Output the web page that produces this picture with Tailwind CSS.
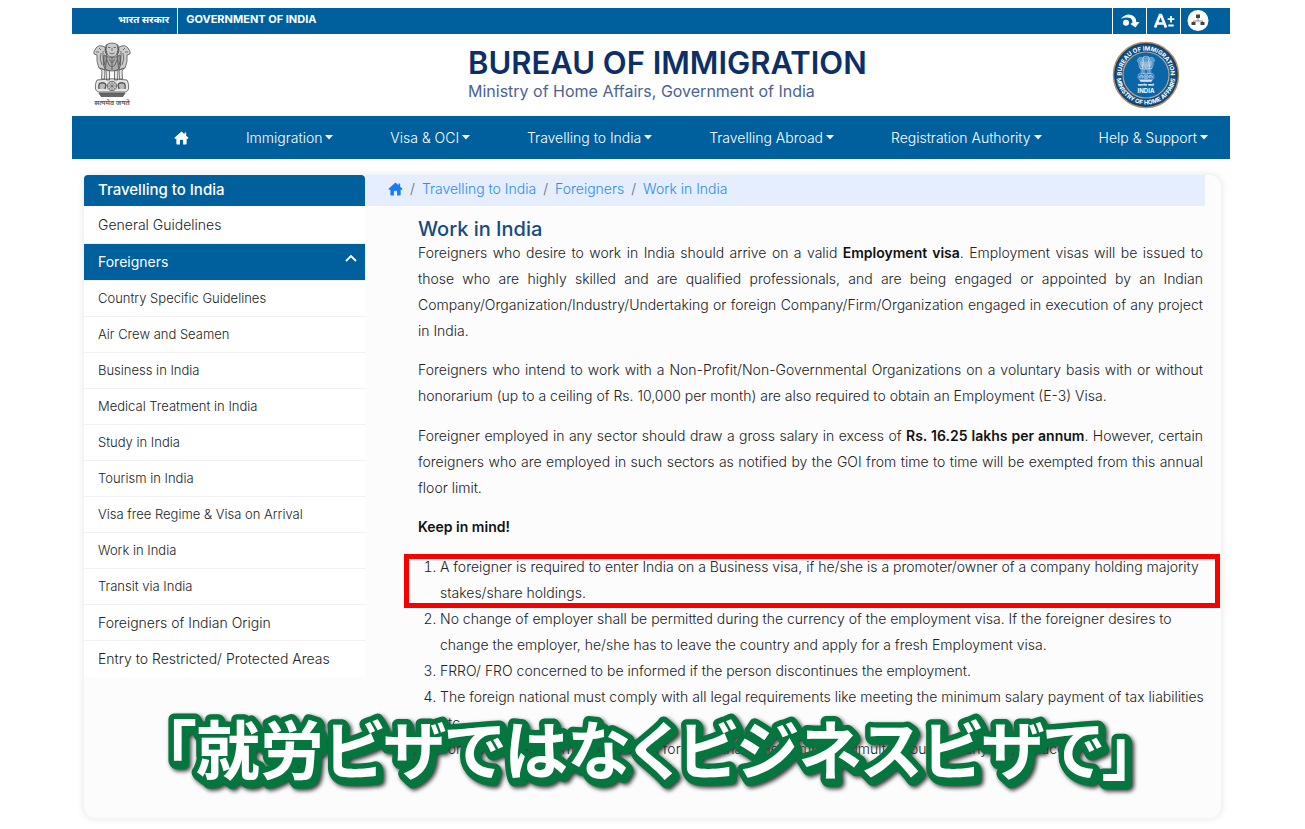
<!DOCTYPE html>
<html lang="en">
<head>
<meta charset="utf-8">
<title>Bureau of Immigration - Work in India</title>
<script src="https://cdn.jsdelivr.net/npm/@tailwindcss/browser@4"></script>
</head>
<body class="bg-white font-['Inter','Noto_Sans','Noto_Sans_CJK_JP',sans-serif] text-[#222]">
<svg class="hidden" aria-hidden="true">
  <symbol id="home" viewBox="0 0 16 15"><path d="M8 0.500L0.800 7a.8.8 0 0 0 .5 1.400H2.500V13.500A1 1 0 0 0 3.500 14.500H6.300V10.500A1 1 0 0 1 7.300 9.500H8.700A1 1 0 0 1 9.700 10.500V14.500H12.500A1 1 0 0 0 13.500 13.500V8.400H14.700A.8.8 0 0 0 15.200 7L13 5V1.500H11.300V3.400Z" fill="currentColor"/></symbol>
  <symbol id="caret" viewBox="0 0 8 5"><path d="M0 0H8L4 4.500Z" fill="currentColor"/></symbol>
  <symbol id="lions" viewBox="0 0 38 56">
    <g fill="currentColor" fill-opacity=".3" stroke="currentColor" stroke-width=".8" stroke-linejoin="round">
      <path d="M13 3Q19-1 25 3L26 9Q25 14 19 15Q13 14 12 9Z"/>
      <path d="M12 5Q6 2 3 6Q2 8 0.700 10Q.5 13 4 13Q3 19 6 26L12 28L14 15Z"/>
      <path d="M26 5Q32 2 35 6Q36 8 37.300 10Q37.500 13 34 13Q35 19 32 26L26 28L24 15Z"/>
      <path d="M11 13Q19 18 27 13Q29 22 26 27Q19 31 12 27Q9 22 11 13Z" fill-opacity=".5"/>
      <path d="M7 26L9 29L8.500 37H11.500L12 28ZM13 28L13.500 38H16.500L16.500 29ZM21.500 29L21.500 38H24.500L25 28ZM26 28L26.500 37H29.500L29 29L31 26Z" fill-opacity=".15"/>
      <path d="M4 38Q1.500 42 2.500 47Q4 51 8 50H30Q34 51 35.500 47Q36.500 42 34 38Q19 35.500 4 38Z" fill-opacity=".15"/>
      <circle cx="19" cy="44" r="4.700" fill-opacity=".2"/>
      <path d="M19 39.500V48.500M14.500 44H23.500M16 41L22 47M22 41L16 47" stroke-width=".5"/>
      <path d="M6 47Q5 41 8 41Q12 40 13 43L12 47M32 47Q33 41 30 41Q26 40 25 43L26 47" stroke-width="1.300"/>
      <path d="M6 51H32L30 54.500H8Z" fill-opacity=".9"/>
    </g>
    <g fill="none" stroke="currentColor" stroke-width=".8">
      <path d="M15 5.500H17.500M20.500 5.500H23M19 6V9M16.500 11Q19 13 21.500 11M14 2.500Q12 8 14.500 13M24 2.500Q26 8 23.500 13"/>
      <path d="M3 10H6M35 10H32M6 6L8 8M32 6L30 8M8 11Q6 17 9 23M30 11Q32 17 29 23M10 9Q9 17 12 23M28 9Q29 17 26 23M14 18L16 23L19 25L22 23L24 18M16 17L19 21L22 17M19 16V28"/>
    </g>
  </symbol>
</svg>
<div class="relative min-h-screen overflow-hidden pt-2 pr-[75px] pl-[72px]">

  <div class="flex h-[26px] bg-[#00609e] text-white">
    <a href="#" lang="hi" class="flex items-center border-r border-white pr-2 pb-1 pl-[46px] text-[10px] font-bold">भारत सरकार</a>
    <a href="#" class="flex items-center pb-1 pl-2 text-[11px] font-bold">GOVERNMENT OF INDIA</a>
    <div class="ml-auto flex pr-4">
      <button aria-label="Skip to main content" class="flex w-[34px] items-center justify-center border-l border-white">
        <svg viewBox="0 0 20 16" class="h-4 w-5"><path d="M1 6Q4 1.500 9 1.500Q16 2 16.300 9H19.500L15.500 14.500L10.500 11L12.500 9.500Q12.500 5.500 9 4.700Q5 4 1 6Z" fill="#fff"/><circle cx="6" cy="9.700" r="3" fill="#fff"/></svg>
      </button>
      <button aria-label="Text size" class="flex w-[34px] items-center justify-center border-l border-white">
        <svg viewBox="0 0 22 18" class="h-[18px] w-[22px]" fill="none" stroke="#fff"><path d="M2 15.500L7 3H8L13 15.500M4 11.500H11" stroke-width="2.700"/><path d="M18 4V10.500M14.700 7.200H21.300M15.300 13.500H20.700" stroke-width="1.800"/></svg>
      </button>
      <button aria-label="Sitemap" class="flex w-[34px] items-center justify-center border-l border-white">
        <svg viewBox="0 0 22 22" class="h-[22px] w-[22px]"><circle cx="11" cy="10.500" r="10.500" fill="#fff"/><path d="M11 7V11M6.500 13V11H15.500V13" fill="none" stroke="#888"/><path d="M9 4.500H13V8H9ZM4.500 12H8.500V15H4.500ZM13.500 12H17.500V15H13.500Z" fill="#444"/></svg>
      </button>
    </div>
  </div>

  <header class="flex h-[82px] items-center justify-between pr-[50px] pl-5">
    <div class="flex w-[40px] flex-col items-center text-[#555]">
      <svg class="h-14 w-[38px]" role="img" aria-label="State Emblem of India"><use href="#lions"/></svg>
      <span lang="hi" class="text-[7px] leading-[10px] font-semibold whitespace-nowrap">सत्यमेव जयते</span>
    </div>
    <div class="mr-auto ml-[336px]">
      <h1 class="text-[31px] leading-8 font-semibold text-[#0d2f68]">BUREAU OF IMMIGRATION</h1>
      <p class="text-base leading-6 text-[#4a6394]">Ministry of Home Affairs, Government of India</p>
    </div>
    <svg viewBox="0 0 68 68" class="h-[68px] w-[68px]" role="img" aria-label="Bureau of Immigration seal">
      <defs><path id="arcTop" d="M9.500 34A24.500 24.500 0 0 1 58.500 34"/><path id="arcBottom" d="M4.500 34A29.500 29.500 0 0 0 63.500 34"/></defs>
      <circle cx="34" cy="34" r="32.500" fill="#0f4f86" stroke="#b98a5c" stroke-width="1.500"/>
      <circle cx="34" cy="34" r="31" fill="none" stroke="#0c3f70"/>
      <circle cx="34" cy="34" r="23" fill="#0b66a8" stroke="#b7a48f" stroke-width="1.200"/>
      <g fill="#fff" font-family="Inter, sans-serif" font-weight="700" font-size="6" text-anchor="middle">
        <text><textPath href="#arcTop" startOffset="50%">BUREAU OF IMMIGRATION</textPath></text>
        <text><textPath href="#arcBottom" startOffset="50%">MINISTRY OF HOME AFFAIRS</textPath></text>
        <text x="34" y="51.500">INDIA</text>
        <text x="34" y="45" font-size="3" lang="hi">सत्यमेव जयते</text>
      </g>
      <use href="#lions" x="24.500" y="14.500" width="19" height="27" color="#e4eef7"/>
    </svg>
  </header>

  <nav class="flex h-[43px] items-center justify-between bg-[#00609e] pr-[22px] pl-[102px] text-sm font-light text-white">
    <a href="#" aria-label="Home"><svg class="h-[14px] w-[15px]"><use href="#home"/></svg></a>
    <a href="#" class="flex items-center gap-[3px]">Immigration <svg class="h-[5px] w-2"><use href="#caret"/></svg></a>
    <a href="#" class="flex items-center gap-[3px]">Visa &amp; OCI <svg class="h-[5px] w-2"><use href="#caret"/></svg></a>
    <a href="#" class="flex items-center gap-[3px]">Travelling to India <svg class="h-[5px] w-2"><use href="#caret"/></svg></a>
    <a href="#" class="flex items-center gap-[3px]">Travelling Abroad <svg class="h-[5px] w-2"><use href="#caret"/></svg></a>
    <a href="#" class="flex items-center gap-[3px]">Registration Authority <svg class="h-[5px] w-2"><use href="#caret"/></svg></a>
    <a href="#" class="flex items-center gap-[3px]">Help &amp; Support <svg class="h-[5px] w-2"><use href="#caret"/></svg></a>
  </nav>

  <main class="mt-4 mr-[9px] ml-3 flex items-start rounded-xl bg-[#fcfcfd] font-light shadow-[0_0_6px_2px_#ededee]">
    <aside class="w-[281px] shrink-0 text-[13px]">
      <h2 class="flex h-[31px] items-center rounded-t bg-[#00609e] px-[14px] text-[15px] font-medium text-white">Travelling to India</h2>
      <ul class="divide-y divide-[#f1f1f2] bg-white">
        <li><a href="#" class="flex h-[37px] items-center px-[14px] text-sm">General Guidelines</a></li>
        <li><a href="#" class="flex h-9 items-center justify-between bg-[#00609e] pr-2 pl-[14px] text-sm font-normal text-white">Foreigners
          <svg viewBox="0 0 12 8" class="mb-2 h-2 w-3" fill="none" stroke="#fff" stroke-width="1.800"><path d="M1 7L6 2L11 7"/></svg></a></li>
        <li class="flex h-9 items-center px-[14px]"><a href="#">Country Specific Guidelines</a></li>
        <li class="flex h-9 items-center px-[14px]"><a href="#">Air Crew and Seamen</a></li>
        <li class="flex h-9 items-center px-[14px]"><a href="#">Business in India</a></li>
        <li class="flex h-9 items-center px-[14px]"><a href="#">Medical Treatment in India</a></li>
        <li class="flex h-9 items-center px-[14px]"><a href="#">Study in India</a></li>
        <li class="flex h-9 items-center px-[14px]"><a href="#">Tourism in India</a></li>
        <li class="flex h-9 items-center px-[14px]"><a href="#">Visa free Regime &amp; Visa on Arrival</a></li>
        <li class="flex h-9 items-center px-[14px]"><a href="#">Work in India</a></li>
        <li class="flex h-9 items-center px-[14px]"><a href="#">Transit via India</a></li>
        <li class="flex h-9 items-center px-[14px] text-sm"><a href="#">Foreigners of Indian Origin</a></li>
        <li class="flex h-9 items-center px-[14px] text-sm"><a href="#">Entry to Restricted/ Protected Areas</a></li>
      </ul>
    </aside>
    <section class="min-w-0 flex-1 pr-4 pb-14">
      <nav aria-label="Breadcrumb" class="flex h-[31px] items-center gap-[7px] bg-[#e4eefe] pb-1 pl-[23px] text-sm text-[#2f8de8]">
        <a href="#" aria-label="Home" class="text-[#1a7cf5]"><svg class="h-[14px] w-[15px]"><use href="#home"/></svg></a>
        <span class="text-[#666]">/</span><a href="#">Travelling to India</a>
        <span class="text-[#666]">/</span><a href="#">Foreigners</a>
        <span class="text-[#666]">/</span><a href="#">Work in India</a>
      </nav>
      <article class="mr-[2px] ml-[53px] text-sm leading-[26px]">
        <h2 class="mt-[13px] text-xl leading-[21px] font-medium text-[#174a82]">Work in India</h2>
        <p class="mb-[13px] whitespace-nowrap">
          <span class="block [text-align-last:justify]">Foreigners who desire to work in India should arrive on a valid <b class="font-semibold text-[#111]">Employment visa</b>. Employment visas will be issued to</span>
          <span class="block [text-align-last:justify]">those who are highly skilled and are qualified professionals, and are being engaged or appointed by an Indian</span>
          <span class="block [text-align-last:justify]">Company/Organization/Industry/Undertaking or foreign Company/Firm/Organization engaged in execution of any project</span>
          <span class="block">in India.</span>
        </p>
        <p class="mb-[14px] whitespace-nowrap">
          <span class="block [text-align-last:justify]">Foreigners who intend to work with a Non-Profit/Non-Governmental Organizations on a voluntary basis with or without</span>
          <span class="block">honorarium (up to a ceiling of Rs. 10,000 per month) are also required to obtain an Employment (E-3) Visa.</span>
        </p>
        <p class="mb-[13px] whitespace-nowrap">
          <span class="block [text-align-last:justify]">Foreigner employed in any sector should draw a gross salary in excess of <b class="font-semibold text-[#111]">Rs. 16.25 lakhs per annum</b>. However, certain</span>
          <span class="block [text-align-last:justify]">foreigners who are employed in such sectors as notified by the GOI from time to time will be exempted from this annual</span>
          <span class="block">floor limit.</span>
        </p>
        <p class="mb-[14px] font-semibold text-[#111]">Keep in mind!</p>
        <ol class="list-decimal pl-[22px] whitespace-nowrap">
          <li class="relative">A foreigner is required to enter India on a Business visa, if he/she is a promoter/owner of a company holding majority<br>stakes/share holdings.<span class="absolute top-0 -right-[17px] -left-9 h-[54px] border-[5px] border-[#f80000]"></span></li>
          <li>No change of employer shall be permitted during the currency of the employment visa. If the foreigner desires to<br>change the employer, he/she has to leave the country and apply for a fresh Employment visa.</li>
          <li>FRRO/ FRO concerned to be informed if the person discontinues the employment.</li>
          <li>The foreign national must comply with all legal requirements like meeting the minimum salary payment of tax liabilities<br>etc.</li>
          <li>Foreigner is not permitted to work for more than one company simultaneously at any other place.</li>
        </ol>
      </article>
    </section>
  </main>

  <svg class="absolute top-[700px] left-[150px] h-[110px] w-[1010px] overflow-visible [filter:drop-shadow(1px_1px_0_#06763f)_drop-shadow(1px_2px_0_#06763f)_drop-shadow(2px_2px_2px_#333)]">
    <text lang="ja" x="14" y="74" fill="#fff" stroke="#06763f" stroke-width="11" stroke-linejoin="round" class="font-['Noto_Sans_CJK_JP',sans-serif] text-[64px] font-bold [font-feature-settings:'palt'] [paint-order:stroke_fill]">「就労ビザではなくビジネスビザで」</text>
  </svg>
</div>
</body>
</html>
